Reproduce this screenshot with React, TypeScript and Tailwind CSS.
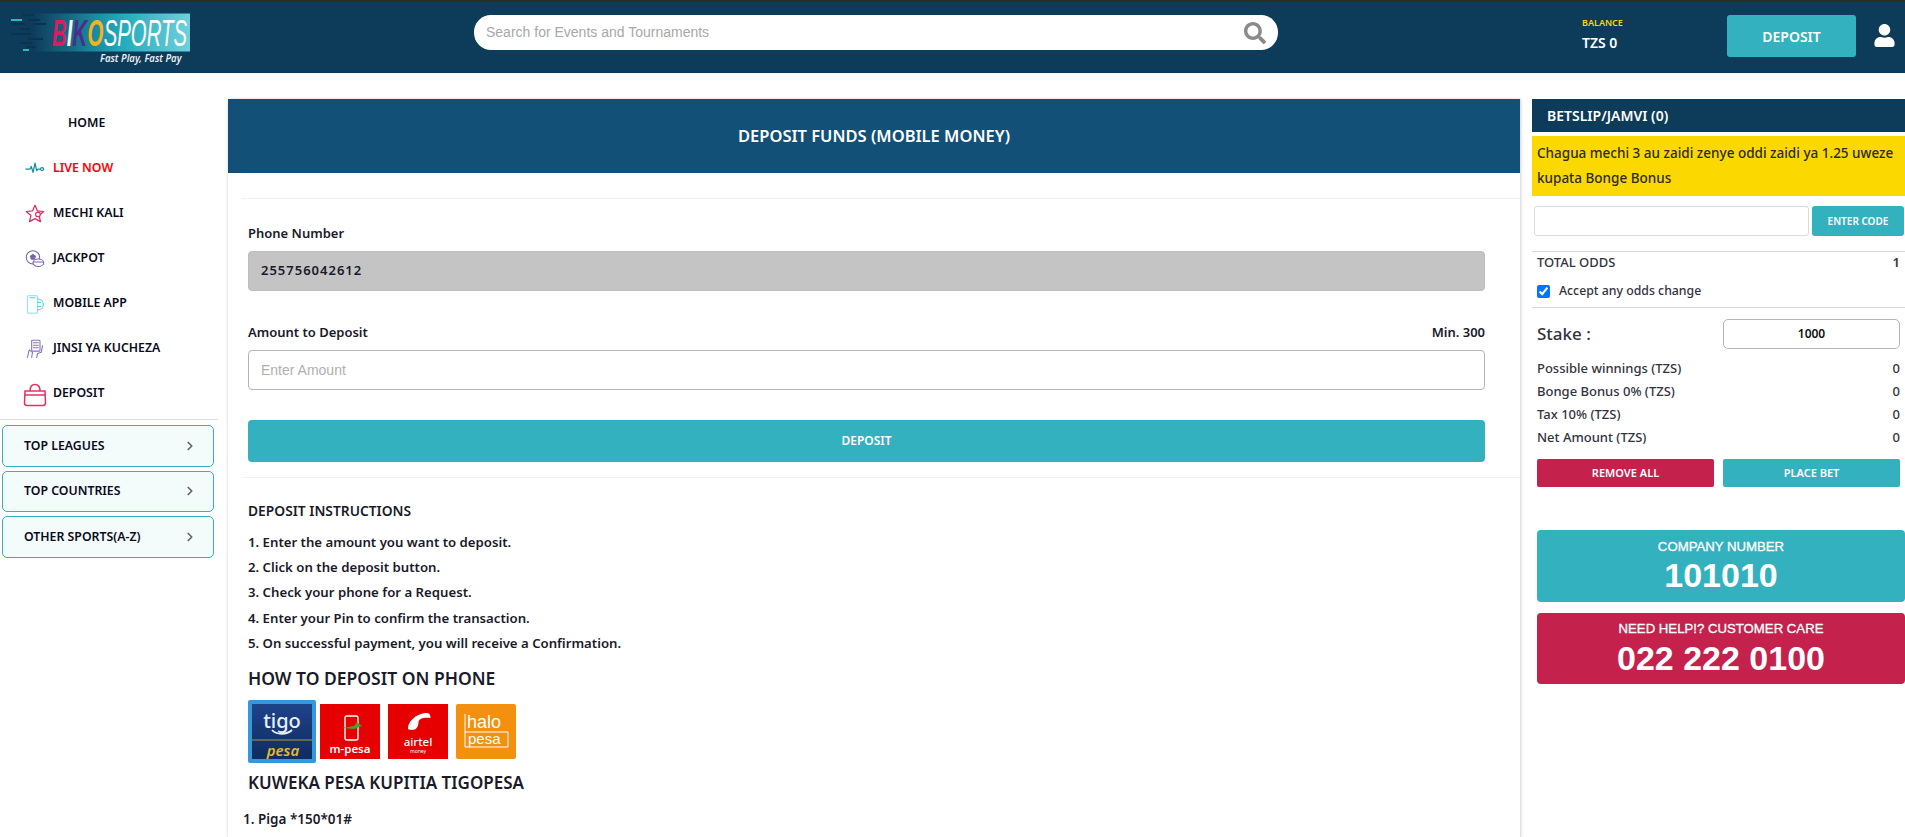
import React from "react";
import { ChevronRight } from "lucide-react";
import { FaSearch, FaUser } from "react-icons/fa";

const F = "[font-family:'Noto_Sans',sans-serif]";

function Logo() {
  const letter = "'Liberation Sans',sans-serif";
  return (
    <svg width="192" height="56" viewBox="0 0 192 56" className="shrink-0">
      <defs>
        <linearGradient id="lg" x1="0" x2="1" y1="0" y2="0">
          <stop offset="0" stopColor="#0d3b5a" />
          <stop offset="0.55" stopColor="#1fa9b8" />
          <stop offset="1" stopColor="#6fd0dc" />
        </linearGradient>
      </defs>
      <rect x="22" y="3.500" width="158" height="38" fill="url(#lg)" />
      <g strokeWidth="2" stroke="#0a3350">
        <path d="M13 5h11M18 10h12M1 14h14M24 14h12M10 19h10M1 24h20M18 29h15M10 33h12M16 37h10" />
      </g>
      <path d="M1 10h11M13 40h6" stroke="#2fb8c4" strokeWidth="2" />
      <g transform="translate(42 35.500) scale(0.55 1)" fontFamily={letter} fontSize="37" fontStyle="italic">
        <text x="0" y="0" fill="#d81e63" fontWeight="700">B</text>
        <text x="27" y="0" fill="#f4f4f4" fontWeight="700">I</text>
        <text x="37.500" y="0" fill="#4a2d8f" fontWeight="700">K</text>
        <text x="64.500" y="0" fill="#f5b21b" fontWeight="700">O</text>
        <text x="94" y="0" fill="#ffffff">SPORTS</text>
      </g>
      <text transform="translate(90 52) scale(0.87 1)" x="0" y="0" fontFamily="'Noto Sans',sans-serif" fontSize="11" fontStyle="italic" fontWeight="600" fill="#e8edf0">Fast Play, Fast Pay</text>
    </svg>
  );
}

const Ic = ({ children }: { children: React.ReactNode }) => (
  <svg width="20" height="20" viewBox="0 0 24 24" fill="none" strokeWidth="1.3" strokeLinecap="round" strokeLinejoin="round" className="shrink-0 mx-[2px]">{children}</svg>
);

const Pulse = () => <Ic><path d="M1 12h5l1.500-3 2.200 7 2.300-11 2 9 1.500-2h3" stroke="#12909f" strokeWidth="1.500" /><circle cx="20.500" cy="12" r="1.800" stroke="#12909f" strokeWidth="1.500" /></Ic>;
const Star = () => <Ic><path d="M12 1.500l3 6.800 7.500.7-5.600 4.900 1.700 7.300L12 17.600l-6.600 3.600 1.700-7.300L1.500 9l7.500-.7z" stroke="#e5285f" strokeWidth="1.500" /><circle cx="15.500" cy="12.500" r="2.800" fill="#fff" stroke="#e5285f" /></Ic>;
const Ball = () => <Ic><circle cx="9.500" cy="10" r="8" stroke="#7a65a8" /><path d="M9.500 6.500l3 2.200-1.100 3.500H7.600L6.500 8.700z" fill="#7a65a8" stroke="#7a65a8" /><ellipse cx="16" cy="16.500" rx="6.500" ry="4.500" fill="#fff" stroke="#7a65a8" /><path d="M10 15.500h12" stroke="#7a65a8" /></Ic>;
const Phone = () => <Ic><rect x="3" y="2" width="12" height="21" rx="1.500" stroke="#9fe5ee" strokeWidth="1.500" /><path d="M15 6c4.500 0 7 3 7 6.500S19.500 19 15 19" stroke="#62c9d6" /><path d="M15 10l4 0M15 15l4 0" stroke="#62c9d6" /><path d="M6 4.500h6" stroke="#62c9d6" /></Ic>;
const HowTo = () => <Ic><rect x="8" y="1.500" width="10" height="13" rx="1" stroke="#8a72b5" /><path d="M10 4.500h6M10 7.500h6M10 10.500h6" stroke="#8a72b5" /><path d="M3 22l2-9 4 3M21 8l-1.500 8-4.500 1.500-1 5M9 16l-1 6" stroke="#8a72b5" /></Ic>;
const Bag = () => (
  <svg width="24" height="24" viewBox="0 0 24 24" fill="none" stroke="#e6305f" strokeWidth="1.500" className="shrink-0 mt-[3px]">
    <path d="M2 8h20l.5 12a2.500 2.500 0 0 1-2.500 2.500H4A2.500 2.500 0 0 1 1.500 20z" />
    <path d="M7 8c0-4 2-6.500 5-6.500S17 4 17 8" />
    <path d="M2 12h20" />
  </svg>
);

const nav: [string, React.ReactNode, string][] = [
  ["LIVE NOW", <Pulse />, "text-[#ff0000]"],
  ["MECHI KALI", <Star />, "text-[#0a0a20]"],
  ["JACKPOT", <Ball />, "text-[#0a0a20]"],
  ["MOBILE APP", <Phone />, "text-[#0a0a20]"],
  ["JINSI YA KUCHEZA", <HowTo />, "text-[#0a0a20]"],
  ["DEPOSIT", <Bag />, "text-[#0a0a20]"],
];

function Sidebar() {
  return (
    <aside className="w-[228px] shrink-0 pt-[28px] pr-[10px]">
      <div className="h-[45px] pl-[68px] flex items-center text-[12.300px] font-semibold text-[#0a0a20]">HOME</div>
      {nav.map(([label, icon, color]) => (
        <div key={label} className="h-[45px] pl-[23px] flex items-center gap-[6px] text-[12.300px] font-semibold">
          {icon}
          <span className={color}>{label}</span>
        </div>
      ))}
      <div className="border-t border-[#dddddd] mt-[3px]" />
      <div className="pl-[2px] pr-[4px] pt-[5px] flex flex-col gap-[4px]">
        {["TOP LEAGUES", "TOP COUNTRIES", "OTHER SPORTS(A-Z)"].map((t) => (
          <div key={t} className="h-[41.500px] rounded-[5px] border border-[#33b1bf] bg-[#f3fbfb] pl-[21px] pr-[16px] flex items-center justify-between text-[12.300px] font-semibold text-[#0a0a20]">
            {t}
            <ChevronRight size={14} strokeWidth={3} className="text-[#666]" />
          </div>
        ))}
      </div>
    </aside>
  );
}

function PayLogos() {
  const sans = "'Liberation Sans',sans-serif";
  const noto = "'Noto Sans',sans-serif";
  return (
    <div className="flex items-center gap-[4px] h-[64px]">
      <svg width="68" height="63" viewBox="0 0 68 63" className="shrink-0">
        <defs>
          <linearGradient id="tg" x1="0" x2="0" y1="0" y2="1">
            <stop offset="0" stopColor="#1d4389" />
            <stop offset="1" stopColor="#102c60" />
          </linearGradient>
        </defs>
        <rect width="68" height="63" rx="2" fill="#3498db" />
        <rect x="4" y="4" width="60" height="55" fill="url(#tg)" />
        <text x="34" y="28" textAnchor="middle" fontFamily={noto} fontSize="20" fontWeight="500" fill="#e8eef8">tigo</text>
        <path d="M24 30c4 5 15 5 20 0" stroke="#e8eef8" strokeWidth="1.800" fill="none" />
        <path d="M4 40h60" stroke="#b09a3c" strokeWidth="1.200" />
        <text x="35" y="56" textAnchor="middle" fontFamily={noto} fontSize="15" fontStyle="italic" fontWeight="600" fill="#e5b92a">pesa</text>
      </svg>
      <svg width="60" height="55" viewBox="0 0 60 55" className="shrink-0">
        <rect width="60" height="55" fill="#e60000" />
        <rect x="25" y="12" width="13" height="24" rx="2" fill="none" stroke="#fff" strokeWidth="1.400" />
        <path d="M22 24l12-2 3-4 5 4-8 3z" fill="#4c9c2e" />
        <text x="30" y="49" textAnchor="middle" fontFamily={noto} fontSize="11.500" fontWeight="600" fill="#fff">m-pesa</text>
      </svg>
      <svg width="60" height="55" viewBox="0 0 60 55" className="ml-[4px] shrink-0">
        <rect width="60" height="55" fill="#e60000" />
        <path d="M20 25c0-9 10-16 19-16 3 0 3.500 3 3.500 5-5-1-12 0-12 4 0 4-2 8-6 8-3 0-4.500-1-4.500-1z" fill="#fff" />
        <text x="30" y="42" textAnchor="middle" fontFamily={noto} fontSize="11.500" fontWeight="500" fill="#fff">airtel</text>
        <text x="30" y="49" textAnchor="middle" fontFamily={noto} fontSize="5" fill="#fff">money</text>
      </svg>
      <svg width="60" height="55" viewBox="0 0 60 55" className="ml-[4px] shrink-0">
        <rect width="60" height="55" rx="2" fill="#f3900f" />
        <text x="11" y="24" fontFamily={sans} fontSize="18" fill="#fff">halo</text>
        <path d="M9 10v33M9 28h43v15H9" stroke="#fff" strokeWidth="1" fill="none" />
        <text x="12" y="40" fontFamily={sans} fontSize="15" fill="#fff">pesa</text>
      </svg>
    </div>
  );
}

function Main() {
  const steps = [
    "1. Enter the amount you want to deposit.",
    "2. Click on the deposit button.",
    "3. Check your phone for a Request.",
    "4. Enter your Pin to confirm the transaction.",
    "5. On successful payment, you will receive a Confirmation.",
  ];
  return (
    <main className="w-[1293px] shrink-0 mt-[26px] border-r border-[#e2e2e2] shadow-[0_0_3px_rgba(0,0,0,0.18)] text-[#1a1a2a]">
      <div className="h-[74px] bg-[#135078] flex items-center justify-center text-white text-[16.500px] font-semibold">
        DEPOSIT FUNDS (MOBILE MONEY)
      </div>
      <div className="pl-[14px] pt-[25px]">
        <div className="border-t border-[#f2f2f2]" />
      </div>
      <div className="pl-[20px] pr-[35px]">
        <div className="h-[34px] mt-[18px] flex items-center text-[13px] font-semibold">Phone Number</div>
        <div className="h-[40px] rounded-[4px] bg-[#c4c4c4] border border-[#bdbdbd] pl-[12px] flex items-center text-[13px] font-semibold tracking-[1px]">255756042612</div>
        <div className="h-[34px] mt-[25px] flex items-center justify-between text-[13px] font-semibold">
          <span>Amount to Deposit</span><span>Min. 300</span>
        </div>
        <div className="h-[40px] rounded-[4px] border border-[#b5b5b5] pl-[12px] flex items-center text-[14px] text-[#b0b0b0] [font-family:'Liberation_Sans',sans-serif]">Enter Amount</div>
        <div className="h-[42px] mt-[30px] rounded-[4px] bg-[#33b1bf] flex items-center justify-center text-white text-[12px] font-semibold">DEPOSIT</div>
      </div>
      <div className="pl-[14px] pt-[15px]">
        <div className="border-t border-[#f2f2f2]" />
      </div>
      <div className="px-[20px]">
        <div className="h-[22px] mt-[22px] flex items-center text-[13.800px] font-semibold">DEPOSIT INSTRUCTIONS</div>
        <div className="mt-[8px]">
          {steps.map((s) => (
            <div key={s} className="h-[25.300px] flex items-center text-[13.200px] font-semibold">{s}</div>
          ))}
        </div>
        <div className="h-[30px] mt-[7px] flex items-center text-[17.500px] font-semibold">HOW TO DEPOSIT ON PHONE</div>
        <div className="mt-[6px]"><PayLogos /></div>
        <div className="h-[30px] mt-[4px] flex items-center text-[17px] font-semibold">KUWEKA PESA KUPITIA TIGOPESA</div>
        <div className="mt-[12px] -ml-[5px] text-[13.500px] font-semibold">1. Piga *150*01#</div>
      </div>
    </main>
  );
}

function Betslip() {
  const rows: [string, string][] = [
    ["Possible winnings (TZS)", "0"],
    ["Bonge Bonus 0% (TZS)", "0"],
    ["Tax 10% (TZS)", "0"],
    ["Net Amount (TZS)", "0"],
  ];
  return (
    <aside className="flex-1 min-w-0 mt-[26px] pl-[11px] text-[#33333d]">
      <div className="h-[33px] bg-[#0d3b5a] pl-[15px] flex items-center text-white text-[14px] font-semibold">BETSLIP/JAMVI (0)</div>
      <div className="mt-[4px] h-[60px] bg-[#fbd900] px-[5px] text-[13.500px] font-medium leading-[25px] pt-[5px] text-[#2b2b20]">
        Chagua mechi 3 au zaidi zenye oddi zaidi ya 1.25 uweze kupata Bonge Bonus
      </div>
      <div className="mt-[10px] pl-[2px] flex gap-[3px] pr-[1px]">
        <div className="h-[30px] w-[275px] rounded-[3px] border border-[#dcdcdc]" />
        <div className="h-[30px] flex-1 rounded-[3px] bg-[#33b1bf] flex items-center justify-center text-white text-[10px] font-semibold">ENTER CODE</div>
      </div>
      <div className="mt-[15px] border-t border-[#d5d5d5]" />
      <div className="h-[22px] px-[5px] flex items-center justify-between text-[13px] font-medium">
        <span>TOTAL ODDS</span><span className="font-semibold">1</span>
      </div>
      <div className="h-[34px] px-[5px] flex items-center gap-[9px] text-[12.300px] font-medium">
        <input type="checkbox" defaultChecked readOnly className="w-[13px] h-[13px] m-0 accent-[#0075ff]" />
        <span>Accept any odds change</span>
      </div>
      <div className="mt-[-1px] border-t border-[#d5d5d5]" />
      <div className="mt-[11px] px-[5px] flex items-center justify-between">
        <span className="text-[17px] font-medium">Stake :</span>
        <div className="w-[177px] h-[30px] rounded-[5px] border border-[#b5b5b5] flex items-center justify-center text-[12px] font-semibold text-[#111]">1000</div>
      </div>
      <div className="mt-[8px] px-[5px] text-[13px] font-medium">
        {rows.map(([k, v]) => (
          <div key={k} className="h-[23px] flex items-center justify-between">
            <span>{k}</span><span>{v}</span>
          </div>
        ))}
      </div>
      <div className="mt-[10px] px-[5px] flex justify-between">
        <div className="w-[177px] h-[28px] rounded-[2px] bg-[#c4224d] flex items-center justify-center text-white text-[11px] font-semibold">REMOVE ALL</div>
        <div className="w-[177px] h-[28px] rounded-[2px] bg-[#33b1bf] flex items-center justify-center text-white text-[11px] font-semibold">PLACE BET</div>
      </div>
      <div className="mt-[43px] ml-[5px] h-[72px] rounded-[4px] bg-[#33b1bf] text-white flex flex-col items-center justify-center leading-none [font-family:'Liberation_Sans',sans-serif]">
        <span className="text-[13.200px] [-webkit-text-stroke:0.3px_white]">COMPANY NUMBER</span>
        <span className="text-[34px] font-bold mt-[5px]">101010</span>
      </div>
      <div className="mt-[11px] ml-[5px] h-[71px] rounded-[4px] bg-[#c4224d] text-white flex flex-col items-center justify-center leading-none [font-family:'Liberation_Sans',sans-serif]">
        <span className="text-[13.200px] [-webkit-text-stroke:0.3px_white]">NEED HELP!? CUSTOMER CARE</span>
        <span className="text-[34px] font-bold mt-[5px]">022 222 0100</span>
      </div>
    </aside>
  );
}

export default function App() {
  return (
    <div className={`h-[837px] overflow-hidden bg-white ${F}`}>
      <header className="h-[73px] bg-[#0d3b5a] border-t-[2px] border-[#2b2b2b] flex items-center pl-[10px]">
        <Logo />
        <div className="ml-[272px] w-[804px] h-[35px] rounded-[17px] bg-white flex items-center justify-between pl-[12px] pr-[12px] mt-[-10px]">
          <span className="text-[14px] text-[#a8a8a8] [font-family:'Liberation_Sans',sans-serif]">Search for Events and Tournaments</span>
          <FaSearch size={22} className="text-[#8a8a8a]" />
        </div>
        <div className="ml-[304px] w-[145px] mt-[-8px]">
          <div className="text-[9px] font-semibold text-[#fbd900] leading-[12px]">BALANCE</div>
          <div className="text-[14px] font-semibold text-white mt-[6px] leading-[16px]">TZS 0</div>
        </div>
        <div className="w-[129px] h-[42px] mt-[-3px] rounded-[3px] bg-[#33b1bf] flex items-center justify-center text-white text-[14px] font-semibold">DEPOSIT</div>
        <FaUser size={23} className="ml-[17px] mt-[-4px] text-white" />
      </header>
      <div className="flex h-[764px]">
        <Sidebar />
        <Main />
        <Betslip />
      </div>
    </div>
  );
}
